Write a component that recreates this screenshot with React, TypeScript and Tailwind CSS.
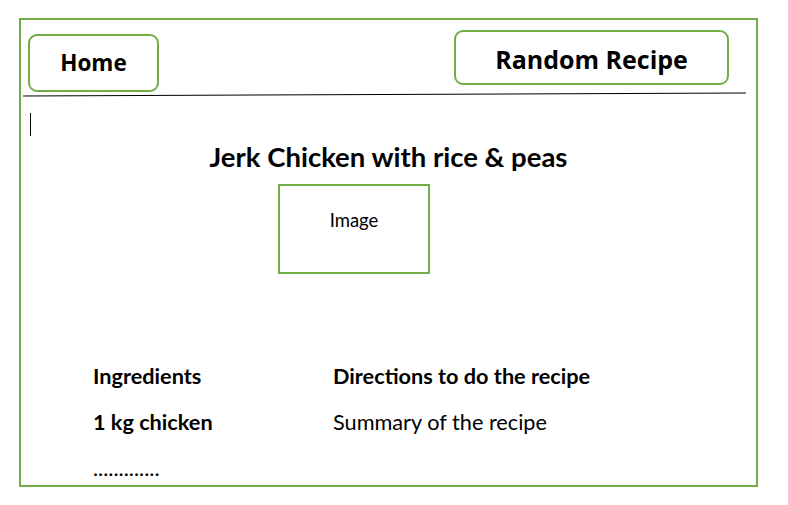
import React from 'react';

const body = { fontFamily: 'Lato, "Open Sans", sans-serif' };
const btn = { fontFamily: '"Open Sans", Lato, sans-serif' };

export default function App() {
  return (
    <div className="w-[788px] h-[505px] bg-white overflow-hidden" style={body}>
      <div className="ml-[19px] mt-[18px] w-[739px] h-[469px] border-2 border-[#70ad47] flex flex-col">
        {/* Header */}
        <div className="flex items-start justify-between">
          <button
            className="ml-[7px] mt-[14px] w-[131px] h-[58px] border-2 border-[#70ad47] rounded-[9px] text-[22.5px] font-bold text-black flex items-center justify-center"
            style={btn}
          >
            Home
          </button>
          <button
            className="mr-[27px] mt-[10px] w-[275px] h-[55px] pt-[5px] border-2 border-[#70ad47] rounded-[9px] text-[25px] font-bold text-black flex items-center justify-center"
            style={btn}
          >
            Random Recipe
          </button>
        </div>

        {/* Divider */}
        <div className="ml-[2px] mr-[10px] mt-[2px] h-px bg-black -rotate-[0.22deg]"></div>

        {/* Cursor */}
        <div className="ml-[9px] mt-[18px] w-px h-[23px] bg-black"></div>

        {/* Title */}
        <h1 className="mt-[4px] text-center text-[27.5px] leading-[34px] font-bold text-black">
          Jerk Chicken with rice &amp; peas
        </h1>

        {/* Image placeholder */}
        <div className="ml-[257px] mt-[10px] w-[152px] h-[90px] border-2 border-[#70ad47] flex justify-center pt-[22px] text-[18.5px] leading-6 text-black">
          Image
        </div>

        {/* Details */}
        <div className="ml-[72px] mt-[89px] grid grid-cols-[240px_1fr] gap-y-[20px] text-[21.7px] leading-[26px] text-black">
          <div className="font-bold">Ingredients</div>
          <div className="font-bold">Directions to do the recipe</div>
          <div className="font-bold">1 kg chicken</div>
          <div>Summary of the recipe</div>
          <div>.............</div>
        </div>
      </div>
    </div>
  );
}
